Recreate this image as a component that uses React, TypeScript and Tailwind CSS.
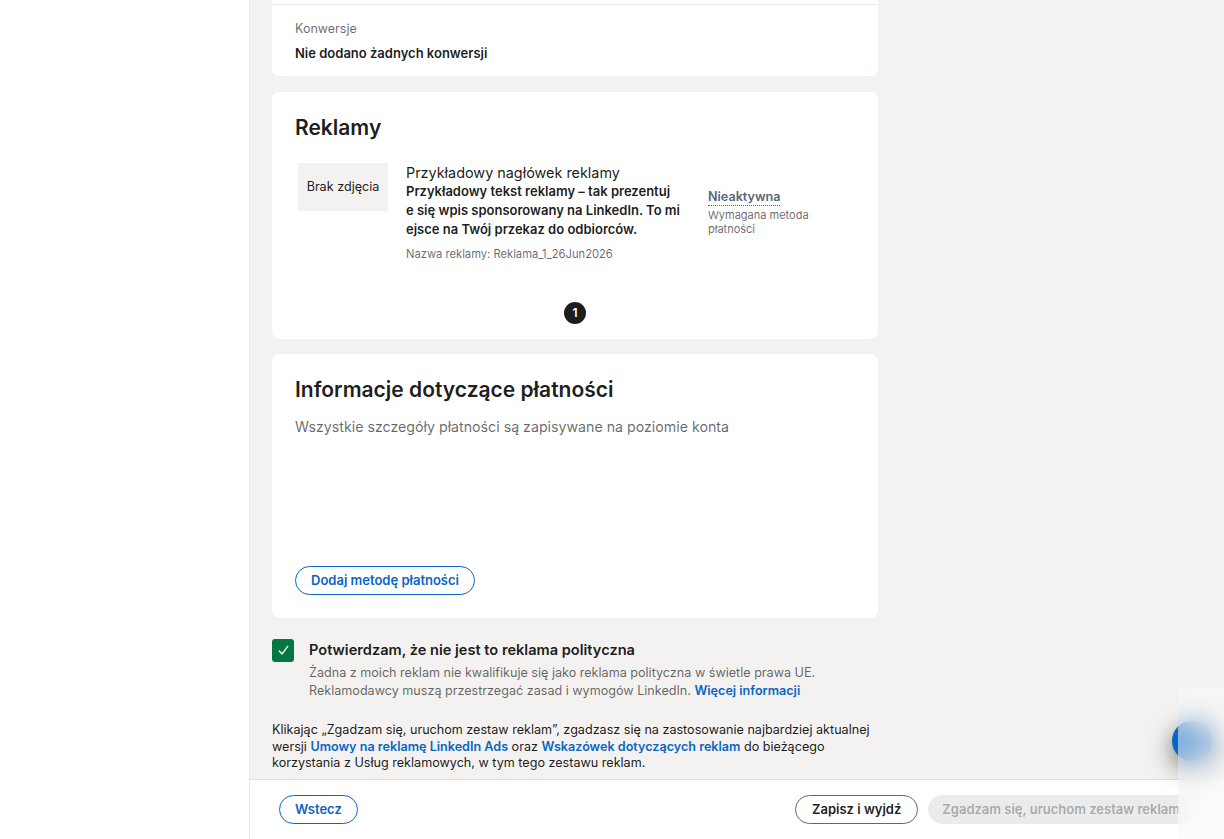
import React from 'react';

const font = { fontFamily: 'Inter, "Noto Sans", sans-serif' };

function Card({ className = '', children }: { className?: string; children: React.ReactNode }) {
  return <section className={`rounded-lg bg-white ${className}`}>{children}</section>;
}

const adLines = [
  'Przykładowy tekst reklamy – tak prezentuj',
  'e się wpis sponsorowany na LinkedIn. To mi',
  'ejsce na Twój przekaz do odbiorców.',
];

function AdPreview() {
  return (
    <div className="ml-[3px] mt-[21px] flex">
      <div className="flex h-12 w-[90px] shrink-0 items-center justify-center bg-[#f3f2f0] text-[12.6px] text-black/90">
        Brak zdjęcia
      </div>
      <div className="ml-[18px] w-[272px] shrink-0">
        <p className="text-[14.4px] leading-[19px] text-black/90">Przykładowy nagłówek reklamy</p>
        <p className="whitespace-nowrap text-[13px] font-semibold leading-[19px] text-black/90">
          {adLines.map((line) => (
            <span key={line} className="block">
              {line}
            </span>
          ))}
        </p>
        <p className="mt-[7px] text-[11.2px] leading-4 text-black/60">Nazwa reklamy: Reklama_1_26Jun2026</p>
      </div>
      <div className="ml-[30px] mt-[20px]">
        <p className="inline-block border-b border-dotted border-[#56687a] text-[12.6px] font-semibold leading-[17px] text-[#56687a]">
          Nieaktywna
        </p>
        <p className="mt-[1px] w-[110px] text-[11px] leading-[14px] text-black/60">Wymagana metoda płatności</p>
      </div>
    </div>
  );
}

export default function App() {
  return (
    <div style={font} className="relative flex h-[839px] w-[1224px] overflow-hidden bg-white">
      <aside className="w-[249px] shrink-0 bg-white" />
      <main className="flex min-w-0 flex-1 flex-col border-l border-[#ebe9e6]">
        <div className="flex-1 overflow-hidden bg-[#f3f2f0] pl-[22px]">
          <div className="w-[606px]">
            <Card className="-mt-4 rounded-t-none px-[23px] pb-[13px] pt-[20px]">
              <div className="-mx-[23px] border-t border-[#ebebeb]" />
              <p className="mt-[14px] text-[12.5px] leading-5 text-black/60">Konwersje</p>
              <p className="mt-1 text-[13px] font-semibold leading-5 text-black/90">Nie dodano żadnych konwersji</p>
            </Card>

            <Card className="mt-[16px] px-[23px] pb-[15px] pt-[22px]">
              <h2 className="text-[21px] font-semibold leading-7 text-black/90">Reklamy</h2>
              <AdPreview />
              <div className="mt-[40px] flex justify-center">
                <span className="flex h-[22px] w-[22px] items-center justify-center rounded-full bg-[#1d1d1d] text-[12px] font-semibold text-white">
                  1
                </span>
              </div>
            </Card>

            <Card className="mt-[15px] px-[23px] pb-[23px] pt-[22px]">
              <h2 className="text-[21px] font-semibold leading-7 text-black/90">Informacje dotyczące płatności</h2>
              <p className="mt-[12px] text-[14.2px] leading-[22px] text-black/60">
                Wszystkie szczegóły płatności są zapisywane na poziomie konta
              </p>
              <button className="mt-[128px] h-[29px] rounded-full border border-[#0a66c2] px-[15px] text-[13px] font-semibold text-[#0a66c2]">
                Dodaj metodę płatności
              </button>
            </Card>

            <div className="mt-[21px] flex">
              <span className="flex h-[23px] w-[22px] shrink-0 items-center justify-center rounded-[3px] bg-[#057642]">
                <svg viewBox="0 0 16 16" className="h-[15px] w-[15px]" fill="none" stroke="white" strokeWidth="1.4">
                  <path d="M3.5 8.5l3 3.2 6-8.2" strokeLinecap="round" strokeLinejoin="round" />
                </svg>
              </span>
              <div className="ml-[15px]">
                <p className="mt-[1px] text-[14.6px] font-semibold leading-5 text-black/90">
                  Potwierdzam, że nie jest to reklama polityczna
                </p>
                <p className="mt-[4px] text-[12.6px] leading-[18px] text-black/60">
                  Żadna z moich reklam nie kwalifikuje się jako reklama polityczna w świetle prawa UE.
                  <br />
                  Reklamodawcy muszą przestrzegać zasad i wymogów LinkedIn.{' '}
                  <a className="font-semibold text-[#0a66c2]">Więcej informacji</a>
                </p>
              </div>
            </div>

            <p className="mt-[22px] text-[12.6px] leading-[16.5px] text-black/90">
              Klikając „Zgadzam się, uruchom zestaw reklam”, zgadzasz się na zastosowanie najbardziej aktualnej wersji{' '}
              <a className="font-semibold text-[#0a66c2]">Umowy na reklamę LinkedIn Ads</a> oraz{' '}
              <a className="font-semibold text-[#0a66c2]">Wskazówek dotyczących reklam</a> do bieżącego korzystania z
              Usług reklamowych, w tym tego zestawu reklam.
            </p>
          </div>
        </div>

        <footer className="flex h-[60px] shrink-0 items-center justify-between border-t border-[#e0dfdc] bg-white pl-[29px] pr-[30px]">
          <button className="h-[29px] rounded-full border border-[#0a66c2] px-[15px] text-[13px] font-semibold text-[#0a66c2]">
            Wstecz
          </button>
          <div className="flex gap-[10px]">
            <button className="h-[29px] rounded-full border border-[#666666] px-[16px] text-[13px] font-semibold text-black/90">
              Zapisz i wyjdź
            </button>
            <button className="h-[29px] rounded-full bg-[#ebebeb] px-[14px] text-[13px] font-semibold text-black/30">
              Zgadzam się, uruchom zestaw reklam
            </button>
          </div>
        </footer>
      </main>

      {/* floating help button under a blurred overlay */}
      <div className="absolute left-[1172px] top-[721px] h-10 w-10 rounded-full bg-[#0a66c2] shadow-[0_8px_24px_rgba(0,0,0,0.55)]" />
      <div className="absolute left-[1178px] top-[688px] h-[151px] w-[46px] bg-[#fafafa]/50 backdrop-blur-md" />
    </div>
  );
}
